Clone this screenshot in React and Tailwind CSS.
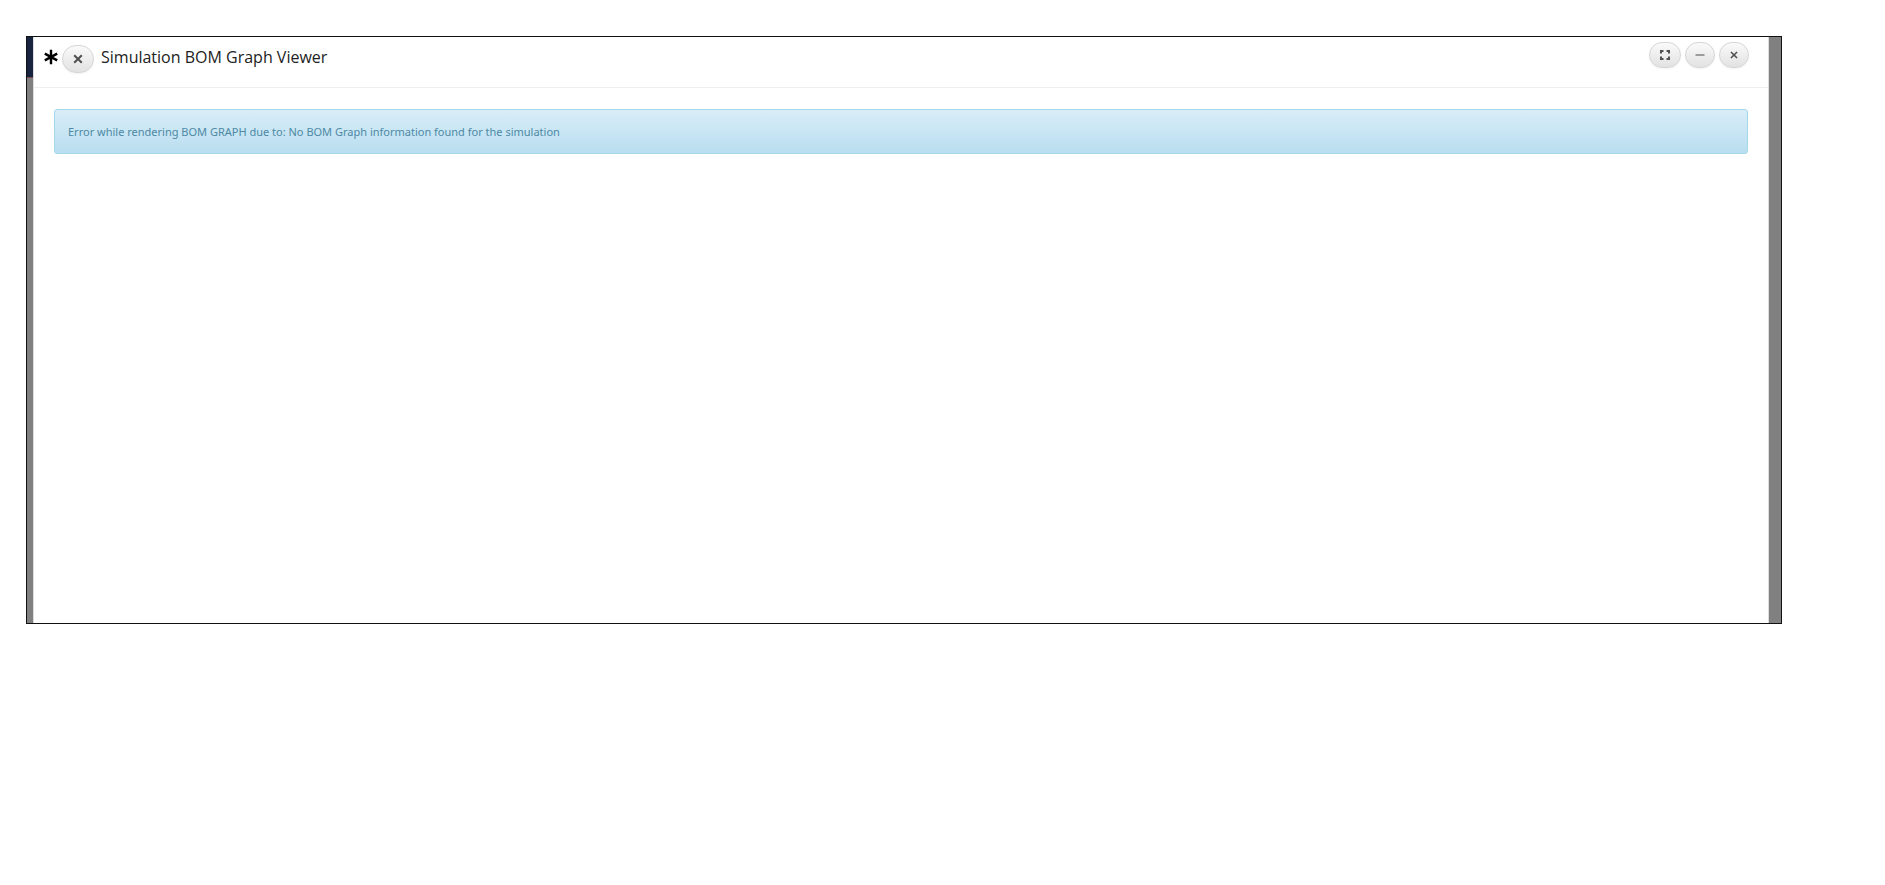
import React from "react";

function RoundButton({ label, className, children }) {
  return (
    <button
      type="button"
      aria-label={label}
      className={`flex items-center justify-center rounded-full border border-[#d6d6d6] bg-linear-to-b from-[#fafafa] to-[#e2e2e2] text-[#505050] shadow-xs ${className}`}
    >
      {children}
    </button>
  );
}

function CrossIcon({ className }) {
  return (
    <svg viewBox="0 0 10 10" className={className} fill="none" stroke="currentColor" strokeWidth="2">
      <path d="M1.2 1.2 8.8 8.8M8.8 1.2 1.2 8.8" />
    </svg>
  );
}

function ExpandIcon() {
  return (
    <svg viewBox="0 0 12 12" className="size-3" fill="none" stroke="currentColor" strokeWidth="2">
      <path d="M2 4.5V2H4.5M7.5 2H10V4.5M10 7.5V10H7.5M4.5 10H2V7.5" />
    </svg>
  );
}

function MinusIcon() {
  return (
    <svg viewBox="0 0 10 10" className="size-2.5" fill="none" stroke="#9c9c9c" strokeWidth="2">
      <path d="M0.5 5H9.5" />
    </svg>
  );
}

function AsteriskIcon() {
  return (
    <svg viewBox="0 0 14 16" className="h-4 w-3.5" fill="none" stroke="#000" strokeWidth="2.4">
      <path d="M7 0.8V15.2M0.8 4.6 13.2 11.4M13.2 4.6 0.8 11.4" />
    </svg>
  );
}

function Header() {
  return (
    <header className="flex h-[51px] items-start justify-between border-b border-[#eee] pr-[19px] pl-2.5">
      <div className="flex items-start pt-2">
        <div className="flex h-6 items-center">
          <AsteriskIcon />
        </div>
        <RoundButton label="Close viewer" className="ml-1 h-7 w-8">
          <CrossIcon className="size-2.5" />
        </RoundButton>
        <h1 className="ml-[7px] text-[16px] leading-6 text-[#222]">Simulation BOM Graph Viewer</h1>
      </div>
      <div className="flex gap-1 pt-[5px]">
        <RoundButton label="Full screen" className="h-[26px] w-8">
          <ExpandIcon />
        </RoundButton>
        <RoundButton label="Minimize" className="h-[26px] w-[30px]">
          <MinusIcon />
        </RoundButton>
        <RoundButton label="Close" className="h-[26px] w-[30px]">
          <CrossIcon className="size-2" />
        </RoundButton>
      </div>
    </header>
  );
}

export default function App() {
  return (
    <div className="min-h-screen bg-white pt-9 pr-[103px] pl-[26px] font-['Open_Sans',sans-serif]">
      <div className="flex min-h-[588px] border border-[#111] bg-[#808080]">
        <div className="w-1.5">
          <div className="h-[41px] border-b border-[#7a4a4a] bg-[#18233f]" />
        </div>
        <main className="min-w-0 flex-1 border-x border-[#ddd] bg-white">
          <Header />
          <div className="px-5 pt-[21px]">
            <div
              role="alert"
              className="rounded-[3px] border border-[#a6d8ec] bg-linear-to-b from-[#d9edf7] to-[#b9def0] px-[13px] py-3 font-['Noto_Sans',sans-serif] text-[11px] leading-[19px] text-[#4d89a5]"
            >
              Error while rendering BOM GRAPH due to: No BOM Graph information found for the simulation
            </div>
          </div>
        </main>
        <div className="w-3" />
      </div>
    </div>
  );
}
